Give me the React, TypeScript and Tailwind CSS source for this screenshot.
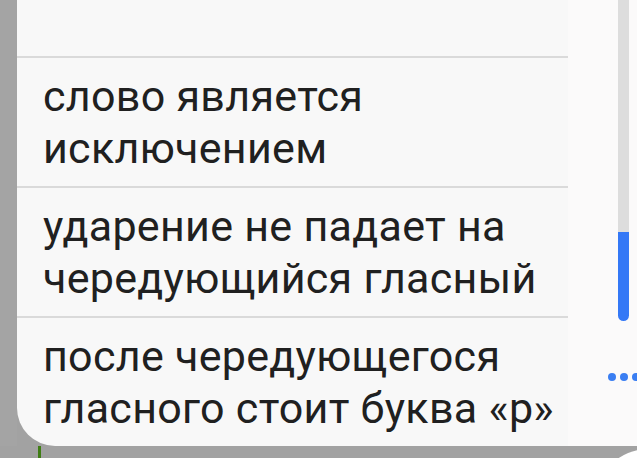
const items = [
  ["слово является", "исключением"],
  ["ударение не падает на", "чередующийся гласный"],
  ["после чередующегося", "гласного стоит буква «р»"],
];

export default function App() {
  return (
    <div className="relative flex h-[458px] w-[637px] flex-col overflow-hidden bg-[#a2a2a2] font-['Roboto',sans-serif]">
      <div className="flex h-[446px]">
        <div className="w-[17px] bg-[#a4a4a4]" />
        <div className="flex flex-1 overflow-hidden rounded-bl-[38px] bg-[#f8f8f8]">
          {/* answer list */}
          <div className="flex w-[551px] flex-col">
            <div className="h-[57px]" />
            {items.map((lines, i) => (
              <div key={i} className="border-t-2 border-[#dadada] px-[26px] py-3 text-[43px] leading-[52px] tracking-[0.3px] text-[#202020]">
                {lines.map((l) => (
                  <div key={l} className="whitespace-nowrap">{l}</div>
                ))}
              </div>
            ))}
          </div>

          {/* scroll side */}
          <div className="flex flex-1 bg-[#fbfafa]">
            <div className="flex flex-col pl-[40px]">
              <div className="ml-[10px] flex w-[11px] flex-col">
                <div className="h-[232px] bg-[#dddddd]" />
                <div className="h-[89px] rounded-b-full bg-[#3478f6]" />
              </div>
              <div className="mt-[52px] flex gap-[4px]">
                <span className="h-2 w-2 rounded-full bg-[#3a7ef2]" />
                <span className="h-2 w-2 rounded-full bg-[#3a7ef2]" />
                <span className="h-2 w-2 rounded-full bg-[#3a7ef2]" />
              </div>
            </div>
          </div>
        </div>
      </div>

      {/* strip below the sheet */}
      <div className="flex flex-1">
        <div className="ml-[38px] w-[3px] bg-[#3f7d14]" />
      </div>

      {/* floating button peeking in */}
      <div className="absolute left-[596px] top-[449px] h-[104px] w-[104px] rounded-full bg-white" />
    </div>
  );
}
